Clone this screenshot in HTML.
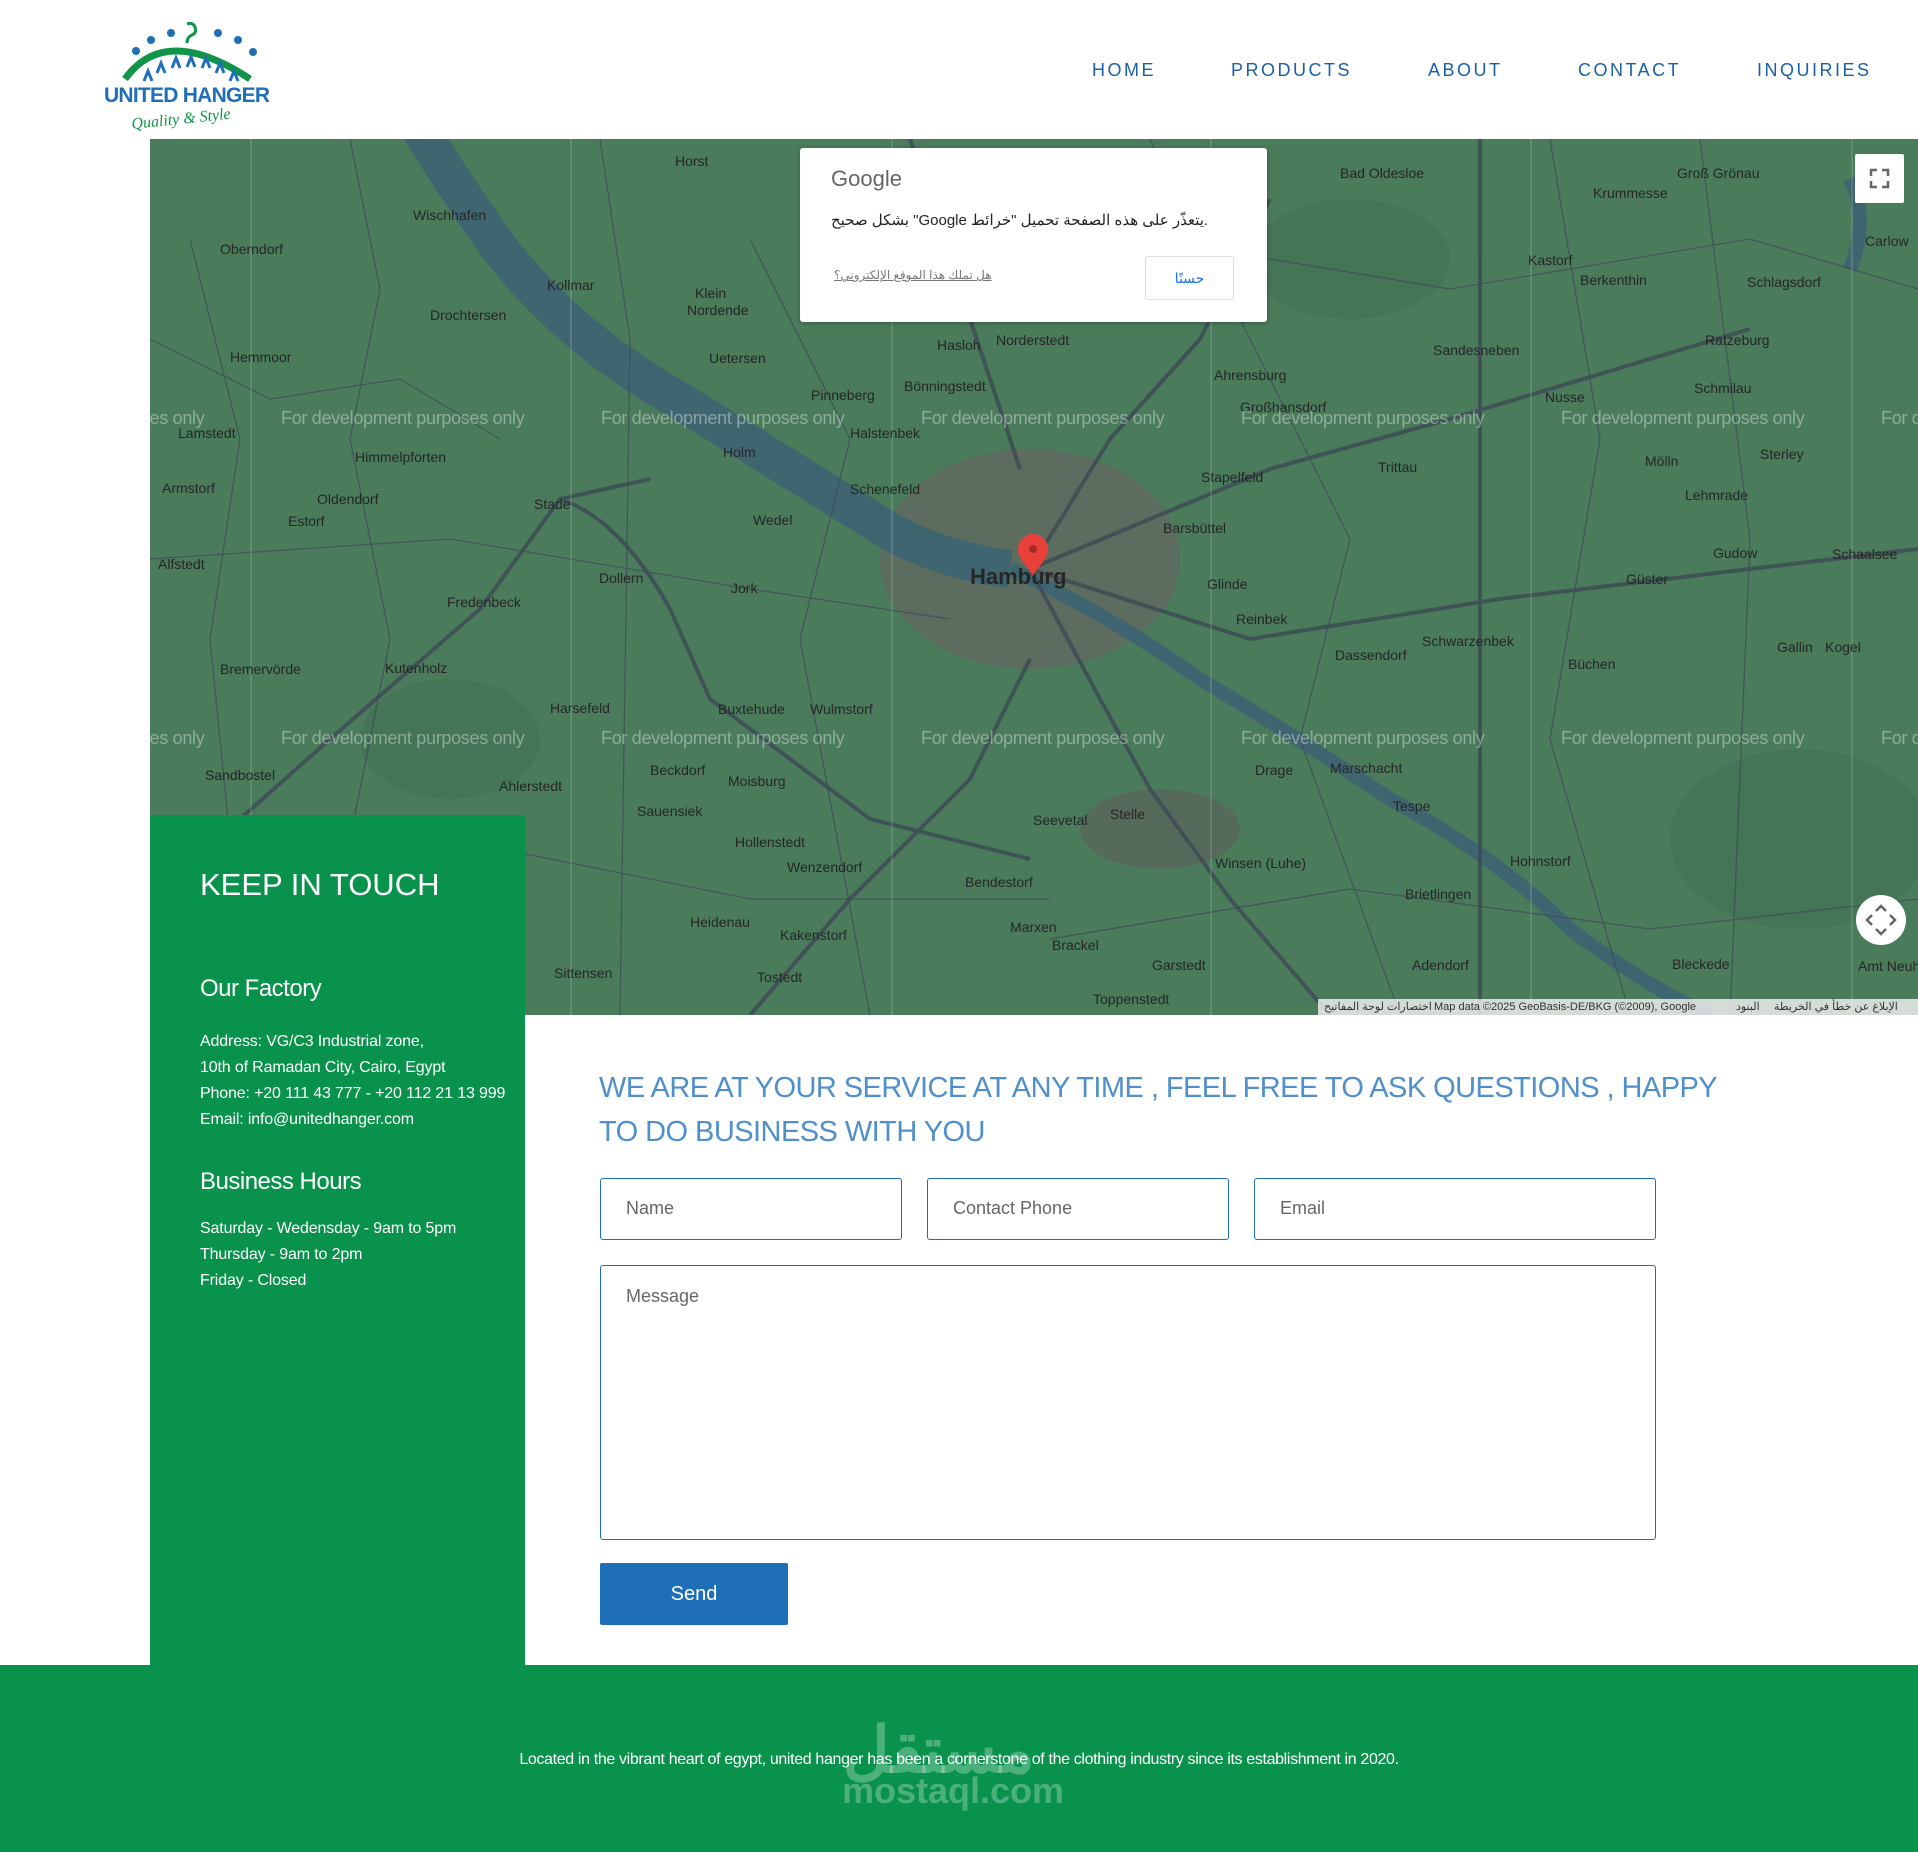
<!DOCTYPE html>
<html><head><meta charset="utf-8">
<style>
*{margin:0;padding:0;box-sizing:border-box}
body{width:1918px;height:1852px;background:#fff;font-family:"Liberation Sans","Noto Sans CJK SC",sans-serif;position:relative;overflow:hidden}
.nav a{position:absolute;top:60px;font-size:18px;letter-spacing:2.5px;color:#1b5fa5;text-decoration:none}
#map{position:absolute;left:150px;top:139px;width:1768px;height:876px;background:#4a7b5b;overflow:hidden}
#panel{position:absolute;left:150px;top:815px;width:375px;height:850px;background:#08924b;color:#fff}
.ptxt{position:absolute;left:50px;font-size:16px;letter-spacing:-0.15px;line-height:26px}
.box{position:absolute;border:1.5px solid #1e6fb8;border-radius:3px;color:#666;font-size:18px;padding-left:25px}
#footer{position:absolute;left:0;top:1665px;width:1918px;height:187px;background:#08924b}
</style></head><body>

<svg style="position:absolute;left:100px;top:15px" width="180" height="120" viewBox="0 0 180 120">
 <path d="M25 64 Q65 8 150 64" stroke="#119447" stroke-width="7" fill="none"/>
 <path d="M87 28 Q87 22 92 20 Q97 18 95 12 Q93 7 87 9" stroke="#119447" stroke-width="3" fill="none"/>
 <g fill="#1e6fb8"><circle cx="36" cy="36" r="4"/><circle cx="51" cy="25" r="4"/><circle cx="71" cy="18" r="4"/><circle cx="118" cy="18" r="4"/><circle cx="138" cy="25" r="4"/><circle cx="153" cy="37" r="4"/></g>
 <g stroke="#1e6fb8" stroke-width="3" fill="none"><path d="M44 66 l4 -10 l4 10"/><path d="M57 58 l4 -10 l4 10"/><path d="M72 53 l4 -10 l4 10"/><path d="M87 52 l4 -10 l4 10"/><path d="M102 53 l4 -10 l4 10"/><path d="M116 58 l4 -10 l4 10"/><path d="M130 66 l4 -10 l4 10"/></g>
 <text x="4" y="87" font-family="Liberation Sans" font-weight="700" font-size="21" fill="#1e6fb8" textLength="166">UNITED HANGER</text>
 <text x="32" y="114" font-family="Liberation Serif" font-style="italic" font-size="16" fill="#119447" transform="rotate(-6 32 114)">Quality &amp; Style</text>
</svg>

<div class="nav">
<a style="left:1092px">HOME</a><a style="left:1231px">PRODUCTS</a><a style="left:1428px">ABOUT</a><a style="left:1578px">CONTACT</a><a style="left:1757px">INQUIRIES</a>
</div>

<div id="map">
<svg width="1768" height="876" style="position:absolute;left:0;top:0">
 <g fill="#447556"><ellipse cx="300" cy="600" rx="90" ry="60"/><ellipse cx="1650" cy="700" rx="130" ry="90"/><ellipse cx="1200" cy="120" rx="100" ry="60"/></g>
 <ellipse cx="880" cy="420" rx="150" ry="110" fill="#5c6c5f"/>
 <ellipse cx="1010" cy="690" rx="80" ry="40" fill="#566a5c"/>
 <path d="M270 -10 Q300 40 350 110 Q420 200 530 262 Q640 330 720 380 Q780 420 860 430" stroke="#3f6670" stroke-width="38" fill="none"/>
 <path d="M860 430 Q950 470 1050 540 Q1150 600 1240 660 Q1350 720 1420 790 Q1500 850 1560 876" stroke="#3f6670" stroke-width="14" fill="none"/>
 <path d="M1700 40 Q1720 80 1700 130" stroke="#3f6670" stroke-width="14" fill="none"/>
 <g stroke="#3d4a55" stroke-width="4" fill="none" opacity=".8">
  <path d="M0 760 L180 600 L330 470 L410 360 L500 340"/>
  <path d="M410 360 Q470 380 520 470 L560 560 L640 620 L720 680 L880 720"/>
  <path d="M880 430 L960 300 L1050 200 L1120 60"/>
  <path d="M880 430 L1000 380 L1120 330 L1300 280 L1600 190"/>
  <path d="M880 430 L950 560 L1000 650 L1080 760 L1180 876"/>
  <path d="M600 876 L700 760 L820 640 L880 520"/>
  <path d="M880 430 L1100 500 L1350 460 L1600 430 L1768 410"/>
  <path d="M760 0 L820 180 L870 330"/>
  <path d="M1330 0 L1330 876"/>
 </g>
 <g stroke="#3d4a55" stroke-width="1.3" fill="none" opacity=".7">
  <path d="M0 200 L120 260 L250 240 L350 300"/><path d="M60 876 L80 700 L60 500 L90 300 L40 100"/>
  <path d="M200 0 L230 150 L200 300 L240 500 L200 700"/><path d="M450 0 L480 200 L470 876"/>
  <path d="M600 100 L700 300 L650 500 L720 876"/><path d="M1000 0 L1100 200 L1200 400 L1150 600 L1250 876"/>
  <path d="M1400 0 L1450 300 L1400 600 L1480 876"/><path d="M1550 0 L1600 400 L1580 876"/>
  <path d="M0 420 L300 400 L600 450 L800 480"/><path d="M900 800 L1200 750 L1500 790 L1768 760"/>
  <path d="M1000 100 L1300 150 L1600 100 L1768 150"/><path d="M300 700 L600 760 L900 760"/>
 </g>
 <g stroke="rgba(255,255,255,.25)" stroke-width="1"><path d="M101 0V876M421 0V876M742 0V876M1061 0V876M1381 0V876M1702 0V876"/></g>
 <g font-family="Liberation Sans" font-size="14" fill="#262626">
  <text x="263" y="81">Wischhafen</text><text x="70" y="115">Oberndorf</text><text x="280" y="181">Drochtersen</text><text x="397" y="151">Kollmar</text><text x="525" y="27">Horst</text>
  <text x="80" y="223">Hemmoor</text><text x="28" y="299">Lamstedt</text><text x="205" y="323">Himmelpforten</text><text x="12" y="354">Armstorf</text><text x="167" y="365">Oldendorf</text><text x="138" y="387">Estorf</text><text x="384" y="370">Stade</text>
  <text x="8" y="430">Alfstedt</text><text x="297" y="468">Fredenbeck</text><text x="449" y="444">Dollern</text><text x="581" y="454">Jork</text><text x="235" y="534">Kutenholz</text><text x="70" y="535">Bremervörde</text><text x="400" y="574">Harsefeld</text>
  <text x="568" y="575">Buxtehude</text><text x="660" y="575">Wulmstorf</text><text x="55" y="641">Sandbostel</text><text x="500" y="636">Beckdorf</text><text x="578" y="647">Moisburg</text><text x="349" y="652">Ahlerstedt</text><text x="487" y="677">Sauensiek</text>
  <text x="585" y="708">Hollenstedt</text><text x="637" y="733">Wenzendorf</text><text x="540" y="788">Heidenau</text><text x="630" y="801">Kakenstorf</text><text x="404" y="839">Sittensen</text><text x="607" y="843">Tostedt</text>
  <text x="815" y="748">Bendestorf</text><text x="860" y="793">Marxen</text><text x="902" y="811">Brackel</text><text x="1002" y="831">Garstedt</text><text x="943" y="865">Toppenstedt</text><text x="883" y="686">Seevetal</text><text x="960" y="680">Stelle</text>
  <text x="1065" y="729">Winsen (Luhe)</text><text x="1243" y="672">Tespe</text><text x="1105" y="636">Drage</text><text x="1180" y="634">Marschacht</text><text x="1255" y="760">Brietlingen</text><text x="1262" y="831">Adendorf</text><text x="1522" y="830">Bleckede</text>
  <text x="1360" y="727">Hohnstorf</text><text x="1418" y="530">Büchen</text><text x="1627" y="513">Gallin</text><text x="1185" y="521">Dassendorf</text><text x="1272" y="507">Schwarzenbek</text><text x="1086" y="485">Reinbek</text><text x="1057" y="450">Glinde</text>
  <text x="1013" y="394">Barsbüttel</text><text x="1051" y="343">Stapelfeld</text><text x="1228" y="333">Trittau</text><text x="1064" y="241">Ahrensburg</text><text x="1090" y="273">Großhansdorf</text><text x="1283" y="216">Sandesneben</text><text x="1395" y="263">Nusse</text>
  <text x="1544" y="254">Schmilau</text><text x="1495" y="327">Mölln</text><text x="1610" y="320">Sterley</text><text x="1535" y="361">Lehmrade</text><text x="1563" y="419">Gudow</text><text x="1476" y="445">Güster</text><text x="1430" y="146">Berkenthin</text><text x="1597" y="148">Schlagsdorf</text>
  <text x="1378" y="126">Kastorf</text><text x="1443" y="59">Krummesse</text><text x="1527" y="39">Groß Grönau</text><text x="1190" y="39">Bad Oldesloe</text><text x="1715" y="107">Carlow</text><text x="1555" y="206">Ratzeburg</text>
  <text x="787" y="211">Hasloh</text><text x="846" y="206">Norderstedt</text><text x="754" y="252">Bönningstedt</text><text x="661" y="261">Pinneberg</text><text x="700" y="299">Halstenbek</text><text x="573" y="318">Holm</text><text x="700" y="355">Schenefeld</text><text x="603" y="386">Wedel</text>
  <text x="559" y="224">Uetersen</text><text x="545" y="159">Klein</text><text x="537" y="176">Nordende</text><text x="1682" y="420">Schaalsee</text><text x="1675" y="513">Kogel</text><text x="1708" y="832">Amt Neuhau</text>
  <text x="820" y="445" font-size="22" font-weight="700">Hamburg</text>
 </g>
 <g font-family="Liberation Sans" font-size="18" fill="rgba(255,255,255,.38)" letter-spacing="-0.3">
  <text x="-189" y="285">For development purposes only</text><text x="131" y="285">For development purposes only</text><text x="451" y="285">For development purposes only</text><text x="771" y="285">For development purposes only</text><text x="1091" y="285">For development purposes only</text><text x="1411" y="285">For development purposes only</text><text x="1731" y="285">For development purposes only</text>
  <text x="-189" y="605">For development purposes only</text><text x="131" y="605">For development purposes only</text><text x="451" y="605">For development purposes only</text><text x="771" y="605">For development purposes only</text><text x="1091" y="605">For development purposes only</text><text x="1411" y="605">For development purposes only</text><text x="1731" y="605">For development purposes only</text>
 </g>
 <path d="M883 437 C876 425 868 420 868 410 A15 15 0 0 1 898 410 C898 420 890 425 883 437Z" fill="#e8413a"/>
 <circle cx="883" cy="410" r="4" fill="#a52a25"/>
</svg>
 <div style="position:absolute;left:650px;top:9px;width:467px;height:174px;background:#fff;border-radius:3px;box-shadow:0 1px 4px rgba(0,0,0,.3)">
  <div style="position:absolute;left:31px;top:18px;font-size:22px;color:#666">Google</div>
  <div style="position:absolute;left:31px;top:63px;font-size:15px;color:#222;white-space:nowrap">بشكل صحيح "Google يتعذّر على هذه الصفحة تحميل "خرائط.</div>
  <div style="position:absolute;left:34px;top:120px;font-size:12px;color:#777;text-decoration:underline">هل تملك هذا الموقع الإلكتروني؟</div>
  <div style="position:absolute;left:345px;top:108px;width:89px;height:44px;border:1px solid #ddd;border-radius:3px;color:#1a73e8;font-size:14px;text-align:center;line-height:42px">حسنًا</div>
 </div>
 <div style="position:absolute;left:1705px;top:15px;width:49px;height:49px;background:#fff;border-radius:2px">
  <svg width="49" height="49"><g stroke="#666" stroke-width="2.5" fill="none"><path d="M16 22V16H22M27 16H33V22M33 27V33H27M22 33H16V27"/></g></svg>
 </div>
 <div style="position:absolute;left:1706px;top:756px;width:50px;height:50px;background:#fff;border-radius:50%">
  <svg width="50" height="50"><g stroke="#666" stroke-width="2.5" fill="none"><path d="M20 16L25 11L30 16M20 34L25 39L30 34M16 20L11 25L16 30M34 20L39 25L34 30"/></g></svg>
 </div>
 <div style="position:absolute;left:1168px;top:860px;width:600px;height:16px;background:rgba(245,245,245,.8);font-size:11px;color:#333;line-height:16px;white-space:nowrap">
  <span style="position:absolute;left:6px">اختصارات لوحة المفاتيح</span><span style="position:absolute;left:116px">Map data ©2025 GeoBasis-DE/BKG (©2009), Google</span><span style="position:absolute;left:418px">البنود</span><span style="position:absolute;left:456px">الإبلاغ عن خطأ في الخريطة</span>
 </div>
</div>

<div id="panel">
 <div style="position:absolute;left:50px;top:52px;font-size:31px">KEEP IN TOUCH</div>
 <div style="position:absolute;left:50px;top:160px;font-size:24px;letter-spacing:-0.5px">Our Factory</div>
 <div class="ptxt" style="top:214px">Address: VG/C3 Industrial zone,<br>10th of Ramadan City, Cairo, Egypt<br>Phone: +20 111 43 777 - +20 112 21 13 999<br>Email: info@unitedhanger.com</div>
 <div style="position:absolute;left:50px;top:353px;font-size:24px;letter-spacing:-0.5px">Business Hours</div>
 <div class="ptxt" style="top:401px">Saturday - Wedensday - 9am to 5pm<br>Thursday - 9am to 2pm<br>Friday - Closed</div>
</div>

<div style="position:absolute;left:599px;top:1066px;width:1140px;font-size:29px;line-height:44px;color:#4f8fcb;letter-spacing:-0.55px">WE ARE AT YOUR SERVICE AT ANY TIME , FEEL FREE TO ASK QUESTIONS , HAPPY TO DO BUSINESS WITH YOU</div>

<div class="box" style="left:600px;top:1178px;width:302px;height:62px;line-height:59px">Name</div>
<div class="box" style="left:927px;top:1178px;width:302px;height:62px;line-height:59px">Contact Phone</div>
<div class="box" style="left:1254px;top:1178px;width:402px;height:62px;line-height:59px">Email</div>
<div class="box" style="left:600px;top:1265px;width:1056px;height:275px;padding-top:20px">Message</div>
<div style="position:absolute;left:600px;top:1563px;width:188px;height:62px;background:#1e6fb8;border-radius:2px;color:#fff;font-size:20px;text-align:center;line-height:62px">Send</div>

<div id="footer">
 <div style="position:absolute;left:843px;top:48px;font-size:64px;font-weight:700;color:rgba(255,255,255,.28)">مستقل</div>
 <div style="position:absolute;left:842px;top:105px;font-size:36px;font-weight:700;color:rgba(255,255,255,.28)">mostaql.com</div>
 <div style="position:absolute;left:0;width:1918px;top:86px;text-align:center;color:#fff;font-size:16px;letter-spacing:-0.35px">Located in the vibrant heart of egypt, united hanger has been a cornerstone of the clothing industry since its establishment in 2020.</div>
</div>
</body></html>
